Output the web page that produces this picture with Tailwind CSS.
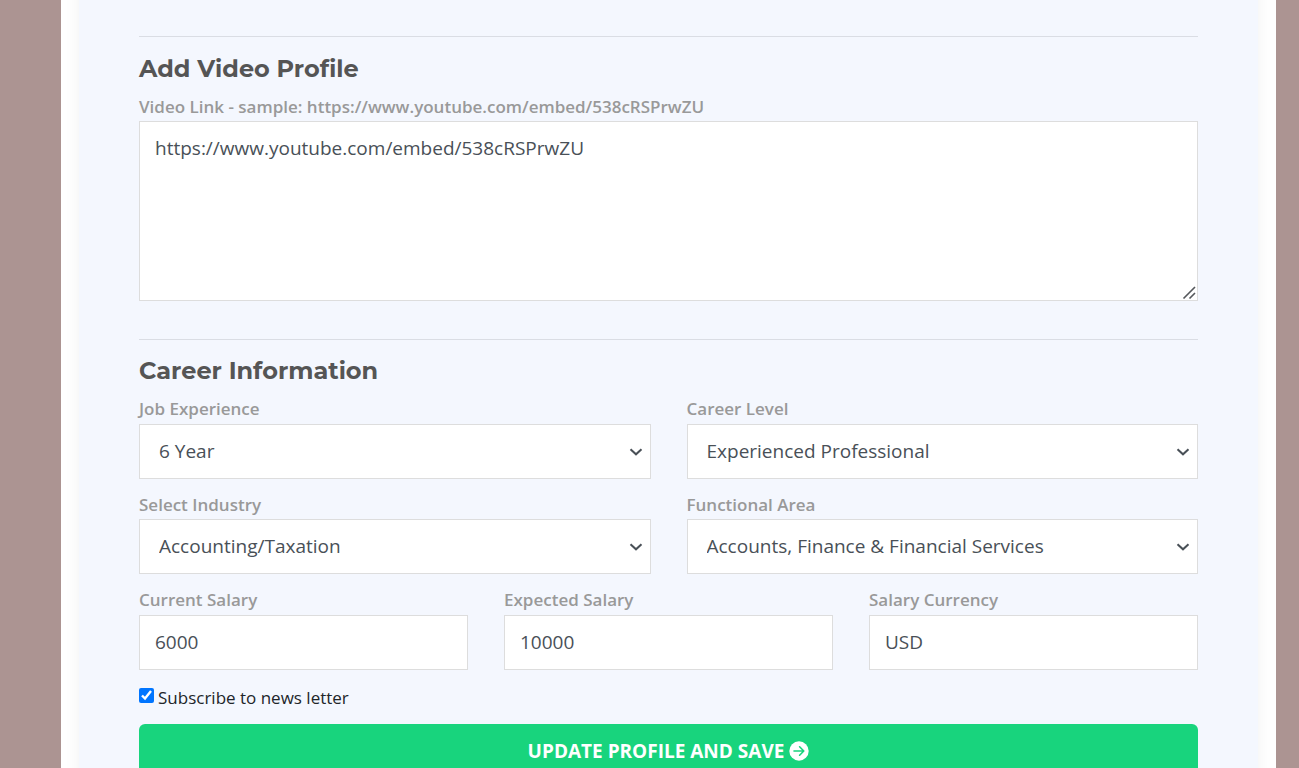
<!DOCTYPE html>
<html lang="en" class="[scrollbar-width:none]">
<head>
<meta charset="utf-8">
<meta name="viewport" content="width=device-width, initial-scale=1">
<title>Edit Profile</title>
<script src="https://cdn.jsdelivr.net/npm/@tailwindcss/browser@4"></script>
</head>
<body class="bg-[#ac9492] font-['Open_Sans',sans-serif] text-[#495057]">
<svg class="hidden"><symbol id="chevron" viewBox="0 0 14 8"><path d="M1.5 1.2 7 6.3l5.5-5.1" fill="none" stroke="#495057" stroke-width="2"/></symbol></svg>
<main class="mr-[23px] ml-[61px] flow-root min-h-screen bg-white px-[18px]">
<form class="-mt-6 bg-[#f4f7fe] px-[60px] pt-[60px] pb-10 shadow-[0_0_15px_rgba(0,0,0,0.06)]">
  <section class="border-t border-[#dadde4] pt-4">
    <h2 class="font-[Montserrat,Inter,sans-serif] text-2xl font-bold text-[#555]">Add Video Profile</h2>
    <label for="video" class="mt-[10px] mb-0.5 block text-[17px] leading-6 font-semibold text-[#999]">Video Link - sample: https://www.youtube.com/embed/538cRSPrwZU</label>
    <div class="relative">
      <textarea id="video" class="block h-[180px] w-full resize-y border border-[#ddd] bg-white px-[15px] py-3 text-[19px] leading-7">https://www.youtube.com/embed/538cRSPrwZU</textarea>
      <svg class="pointer-events-none absolute right-px bottom-px size-4 bg-white" viewBox="0 0 16 16" fill="none" stroke="#55585c" stroke-width="1.6" aria-hidden="true"><path d="M2.5 14.5 14 3M8.5 14.5 14 9"/></svg>
    </div>
  </section>

  <section class="mt-[38px] border-t border-[#dadde4] pt-[15px]">
    <h2 class="font-[Montserrat,Inter,sans-serif] text-2xl font-bold text-[#555]">Career Information</h2>
    <div class="mt-[10px] grid grid-cols-2 gap-x-9 gap-y-[14px]">
      <div>
        <label for="experience" class="mb-[3px] block text-[17px] leading-6 font-semibold text-[#999]">Job Experience</label>
        <div class="relative">
          <select id="experience" class="block h-[55px] w-full appearance-none border border-[#ddd] bg-white px-[19px] text-[19px]"><option>6 Year</option></select>
          <svg class="pointer-events-none absolute top-6 right-2 h-2 w-3.5" aria-hidden="true"><use href="#chevron"/></svg>
        </div>
      </div>
      <div>
        <label for="level" class="mb-[3px] block text-[17px] leading-6 font-semibold text-[#999]">Career Level</label>
        <div class="relative">
          <select id="level" class="block h-[55px] w-full appearance-none border border-[#ddd] bg-white px-[19px] text-[19px]"><option>Experienced Professional</option></select>
          <svg class="pointer-events-none absolute top-6 right-2 h-2 w-3.5" aria-hidden="true"><use href="#chevron"/></svg>
        </div>
      </div>
      <div>
        <label for="industry" class="mb-0.5 block text-[17px] leading-6 font-semibold text-[#999]">Select Industry</label>
        <div class="relative">
          <select id="industry" class="block h-[55px] w-full appearance-none border border-[#ddd] bg-white px-[19px] text-[19px]"><option>Accounting/Taxation</option></select>
          <svg class="pointer-events-none absolute top-6 right-2 h-2 w-3.5" aria-hidden="true"><use href="#chevron"/></svg>
        </div>
      </div>
      <div>
        <label for="area" class="mb-0.5 block text-[17px] leading-6 font-semibold text-[#999]">Functional Area</label>
        <div class="relative">
          <select id="area" class="block h-[55px] w-full appearance-none border border-[#ddd] bg-white px-[19px] text-[19px]"><option>Accounts, Finance &amp; Financial Services</option></select>
          <svg class="pointer-events-none absolute top-6 right-2 h-2 w-3.5" aria-hidden="true"><use href="#chevron"/></svg>
        </div>
      </div>
    </div>
    <div class="mt-[14px] grid grid-cols-3 gap-x-9">
      <div>
        <label for="current" class="mb-[3px] block text-[17px] leading-6 font-semibold text-[#999]">Current Salary</label>
        <input id="current" type="text" value="6000" class="block h-[55px] w-full border border-[#ddd] bg-white px-[15px] pb-0.5 text-[19px]">
      </div>
      <div>
        <label for="expected" class="mb-[3px] block text-[17px] leading-6 font-semibold text-[#999]">Expected Salary</label>
        <input id="expected" type="text" value="10000" class="block h-[55px] w-full border border-[#ddd] bg-white px-[15px] pb-0.5 text-[19px]">
      </div>
      <div>
        <label for="currency" class="mb-[3px] block text-[17px] leading-6 font-semibold text-[#999]">Salary Currency</label>
        <input id="currency" type="text" value="USD" class="block h-[55px] w-full border border-[#ddd] bg-white px-[15px] pb-0.5 text-[19px]">
      </div>
    </div>
  </section>

  <div class="mt-[15px] flex items-start gap-1 text-[17px] leading-[26px] text-[#212529]">
    <input id="subscribe" type="checkbox" checked class="mt-[3px] size-[15px] accent-[#0075ff]">
    <label for="subscribe">Subscribe to news letter</label>
  </div>

  <button type="button" class="mt-[13px] flex h-[53px] w-full items-center justify-center gap-[5px] rounded-md bg-[#18d47d] text-[19px] leading-7 font-bold text-white uppercase">
    Update Profile and Save
    <svg class="size-5" viewBox="0 0 20 20" fill="none" aria-hidden="true">
      <circle cx="10" cy="10" r="9.7" fill="#fff"/>
      <path d="M5 10h9.6M10.6 5.8l4.2 4.2-4.2 4.2" stroke="#18d47d" stroke-width="1.6" stroke-linecap="round" stroke-linejoin="round"/>
    </svg>
  </button>
</form>
</main>
</body>
</html>
